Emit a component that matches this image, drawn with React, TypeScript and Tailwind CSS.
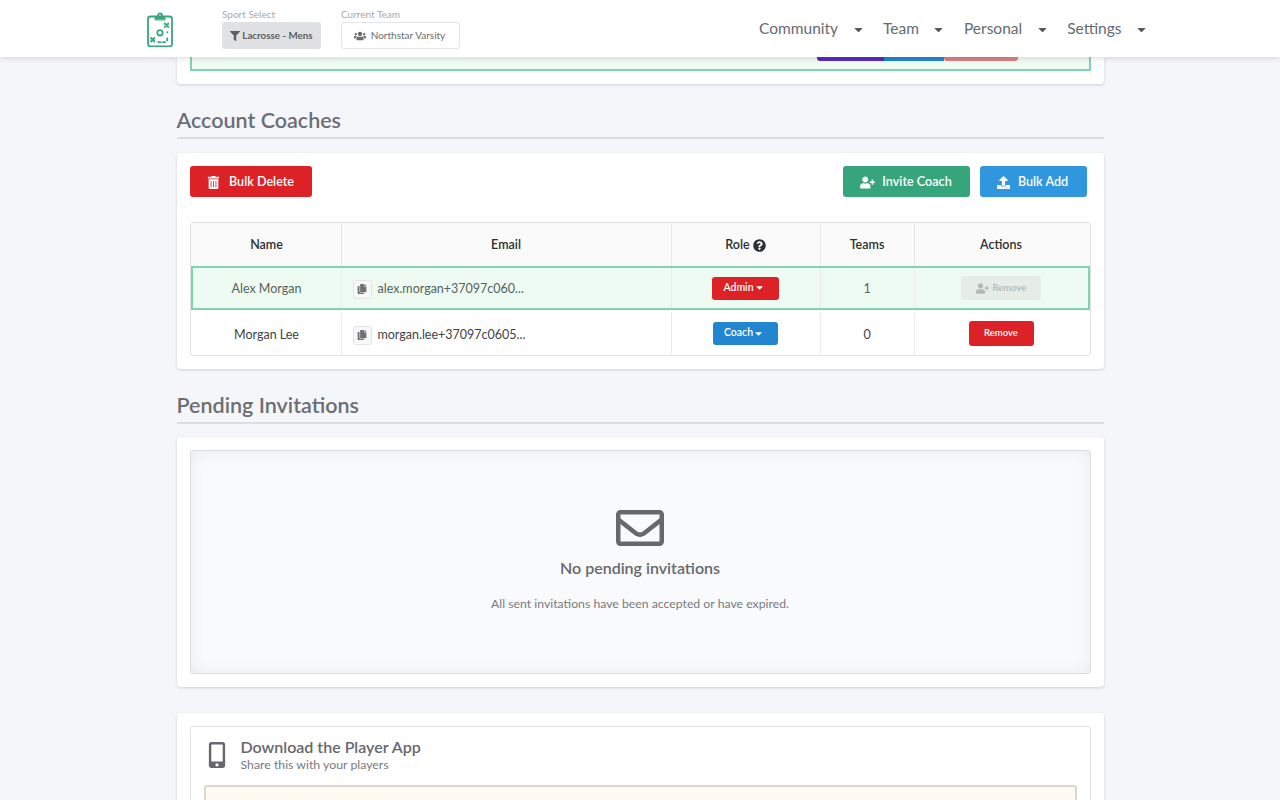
import { FaCaretDown, FaCopy, FaFilter, FaMobileAlt, FaQuestionCircle, FaRegEnvelope, FaTrashAlt, FaUpload, FaUserPlus, FaUsers } from "react-icons/fa";

const navItems = ["Community", "Team", "Personal", "Settings"];

function Logo() {
  return (
    <svg width="28" height="36" viewBox="0 0 28 36" fill="none" stroke="#3aa67d" strokeWidth="1.800" strokeLinecap="round">
      <rect x="2" y="5.500" width="24" height="30" rx="2.500" />
      <circle cx="14" cy="4.500" r="2" />
      <path d="M9 8.500V7a1 1 0 0 1 1-1h8a1 1 0 0 1 1 1v1.500Z" fill="#3aa67d" strokeWidth="1" />
      <path d="M18.800 12.500l3.600 3.600M22.400 12.500l-3.600 3.600M5 27l3.500 3.500M8.500 27l-3.500 3.500" />
      <circle cx="14" cy="21.800" r="2.700" />
      <path d="M12.300 31.200h6a3 3 0 0 0 3-3v-3" strokeDasharray="2.200 2.400" />
      <circle cx="21.300" cy="21.200" r="1" fill="#3aa67d" stroke="none" />
    </svg>
  );
}

function Header() {
  return (
    <header className="relative z-10 flex h-[57px] shrink-0 items-center bg-white pl-[146px] pr-[132px] shadow-[0_1px_6px_rgba(30,40,60,0.16)]">
      <Logo />
      <div className="ml-[48px] flex flex-col">
        <span className="text-[10px] leading-[12px] text-[#a9a9a9]">Sport Select</span>
        <div className="mt-[2px] flex h-[27px] w-[99px] items-center justify-center gap-[2px] rounded-[3px] bg-[#e0e1e2] text-[9.800px] font-bold text-[#5e5e5e]">
          <FaFilter className="text-[10px]" />
          Lacrosse - Mens
        </div>
      </div>
      <div className="ml-[20px] flex flex-col">
        <span className="text-[10px] leading-[12px] text-[#a9a9a9]">Current Team</span>
        <div className="mt-[2px] flex h-[27px] w-[119px] items-center justify-center gap-[5px] rounded-[3px] border border-[#e3e4e6] bg-white pr-[2px] text-[10px] text-[#6b6b6b]">
          <FaUsers className="text-[12px]" />
          Northstar Varsity
        </div>
      </div>
      <nav className="ml-auto flex items-center gap-[18.500px] pt-[1px] text-[15.500px] text-[#666a70]">
        {navItems.map((item) => (
          <div key={item} className="flex items-center gap-[13.500px]">
            {item}
            <FaCaretDown className="text-[13px] text-[#55585c]" />
          </div>
        ))}
      </nav>
    </header>
  );
}

function SectionTitle({ title }: { title: string }) {
  return (
    <h2 className="border-b-2 border-[#dcdde0] pb-[3px] pt-[1px] text-[21.500px] font-semibold leading-[27px] text-[#6b6e75]">
      {title}
    </h2>
  );
}

const columns = ["w-[149px]", "w-[330px]", "w-[149px]", "w-[94px]", "flex-1"];

function CoachRow({
  name,
  email,
  role,
  teams,
  self,
}: {
  name: string;
  email: string;
  role: string;
  teams: string;
  self?: boolean;
}) {
  const cell = "flex items-center border-r border-[#e9eaec]";
  const textPad = self ? "pt-[2px]" : "pt-[3px]";
  return (
    <div
      className={
        self
          ? "flex h-[44px] border-2 border-[#7fd4ad] bg-[#eefbf2] text-[#55635b]"
          : "flex h-[45px] pl-[2px] pr-[2px] pt-[2px] text-[#3f4247]"
      }
    >
      <div className={`${columns[0]} ${cell} ${textPad} justify-center text-[12.500px]`}>{name}</div>
      <div className={`${columns[1]} ${cell} ${textPad} gap-[6px] pl-[11px] text-[12.500px]`}>
        <span className="flex h-[19px] w-[19px] items-center justify-center rounded-[3px] border border-[#e3e4e6] bg-[#f8f8f8] text-[10px] text-[#6d6f73]">
          <FaCopy />
        </span>
        {email}
      </div>
      <div className={`${columns[2]} ${cell} justify-center`}>
        <span
          className={
            role === "Admin"
              ? "flex h-[23px] w-[67px] items-center justify-center rounded-[3px] bg-[#dc2227] pb-[1px] pr-[3px] text-[10.500px] font-semibold text-white"
              : "flex h-[23px] w-[65px] items-center justify-center rounded-[3px] bg-[#2185d0] pb-[1px] pr-[3px] text-[10.500px] font-semibold text-white"
          }
        >
          {role}
          <FaCaretDown className="text-[11px]" />
        </span>
      </div>
      <div className={`${columns[3]} ${cell} ${textPad} justify-center text-[12.500px]`}>{teams}</div>
      <div className={`${columns[4]} flex items-center justify-center`}>
        {self ? (
          <span className="flex h-[24px] w-[80px] items-center justify-center gap-[4px] rounded-[3px] bg-[#e6ece8] text-[9.500px] font-semibold text-[#b3b8b5]">
            <FaUserPlus className="text-[13px]" />
            Remove
          </span>
        ) : (
          <span className="flex h-[25px] w-[65px] items-center justify-center rounded-[3px] bg-[#dc2227] text-[9.500px] font-semibold text-white">
            Remove
          </span>
        )}
      </div>
    </div>
  );
}

export default function App() {
  return (
    <div className="flex h-[800px] w-[1280px] flex-col overflow-hidden bg-[#f5f6fa] font-['Lato',sans-serif]">
      <Header />
      <main className="mx-auto flex w-[927px] flex-col">
        {/* bottom of the card scrolled under the header */}
        <section className="h-[27px] rounded-b-[4px] bg-white px-[13px] shadow-[0_1px_3px_rgba(30,40,60,0.18)]">
          <div className="flex h-[14px] justify-end border-x-2 border-b-2 border-[#7fd4ad] bg-[#eefbf2] pr-[71px]">
            <div className="flex h-[4px]">
              <span className="w-[67px] rounded-bl-[3px] bg-[#5829bb]" />
              <span className="w-[60px] bg-[#2185d0]" />
              <span className="w-[74px] rounded-b-[3px] bg-[#dc7f84]" />
            </div>
          </div>
        </section>

        <div className="mt-[22px]">
          <SectionTitle title="Account Coaches" />
        </div>
        <section className="mt-[14px] h-[216px] rounded-[4px] bg-white px-[13px] pt-[13px] shadow-[0_1px_3px_rgba(30,40,60,0.18)]">
          <div className="flex h-[31px] pr-[4px] text-[12.600px] font-semibold text-white">
            <button className="flex w-[122px] items-center justify-center gap-[9px] rounded-[3px] bg-[#dc2227] pt-[1px]">
              <FaTrashAlt className="text-[13px]" />
              Bulk Delete
            </button>
            <button className="ml-auto flex w-[127px] items-center justify-center gap-[7px] rounded-[3px] bg-[#37a57b] pt-[1px]">
              <FaUserPlus className="text-[15px]" />
              Invite Coach
            </button>
            <button className="ml-[10px] flex w-[107px] items-center justify-center gap-[8px] rounded-[3px] bg-[#3096de] pr-[1px] pt-[1px]">
              <FaUpload className="text-[13px]" />
              Bulk Add
            </button>
          </div>
          <div className="mt-[25px] overflow-hidden rounded-[3px] border border-[#e1e2e4]">
            <div className="flex h-[43px] bg-[#fafafa] pl-[2px] pr-[2px] pt-[1px] text-[12.500px] font-semibold text-[#2d2f33]">
              {["Name", "Email", "Role", "Teams", "Actions"].map((label, i) => (
                <div
                  key={label}
                  className={`${columns[i]} flex items-center justify-center gap-[3px] ${i < 4 ? "border-r border-[#e6e7e9]" : ""}`}
                >
                  {label}
                  {label === "Role" && <FaQuestionCircle className="text-[13px]" />}
                </div>
              ))}
            </div>
            <CoachRow name="Alex Morgan" email="alex.morgan+37097c060..." role="Admin" teams="1" self />
            <CoachRow name="Morgan Lee" email="morgan.lee+37097c0605..." role="Coach" teams="0" />
          </div>
        </section>

        <div className="mt-[22px]">
          <SectionTitle title="Pending Invitations" />
        </div>
        <section className="mt-[13px] h-[250px] rounded-[4px] bg-white p-[13px] shadow-[0_1px_3px_rgba(30,40,60,0.18)]">
          <div className="flex h-[224px] flex-col items-center rounded-[3px] border border-[#dcdde0] bg-[#f9fafb] pt-[53px] shadow-[inset_0_0_16px_rgba(30,40,60,0.07)]">
            <FaRegEnvelope className="text-[48px] leading-none text-[#66686e]" />
            <div className="mt-[4px] text-[16px] font-semibold text-[#66686e]">No pending invitations</div>
            <div className="mt-[15px] text-[12.250px] text-[#777a80]">
              All sent invitations have been accepted or have expired.
            </div>
          </div>
        </section>

        <section className="mt-[26px] h-[120px] rounded-[4px] bg-white px-[13px] pt-[13px] shadow-[0_1px_3px_rgba(30,40,60,0.18)]">
          <div className="h-[200px] rounded-[3px] border border-[#e1e2e4] px-[13px]">
            <div className="flex items-center gap-[11px] pt-[10px]">
              <FaMobileAlt className="text-[26px] text-[#66686e]" />
              <div>
                <div className="text-[16px] font-semibold leading-[20px] text-[#66686e]">Download the Player App</div>
                <div className="text-[12.300px] leading-[15px] text-[#777a80]">Share this with your players</div>
              </div>
            </div>
            <div className="mt-[13px] h-[60px] rounded-[3px] border-2 border-[#dcd8cc] bg-[#fffbf3]" />
          </div>
        </section>
      </main>
    </div>
  );
}
